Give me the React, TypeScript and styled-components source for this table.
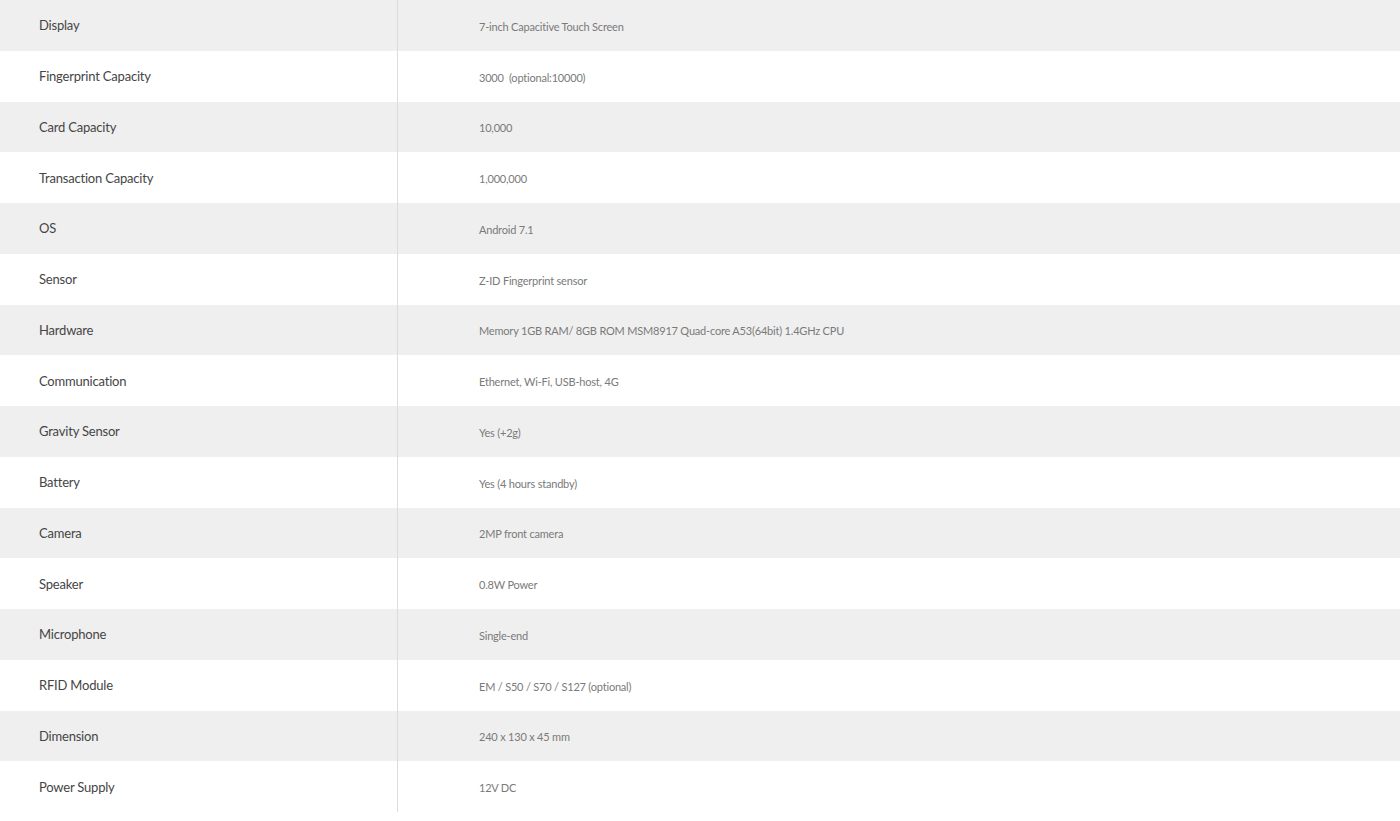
import styled, { createGlobalStyle } from "styled-components";

const GlobalStyle = createGlobalStyle`
  html, body {
    margin: 0;
    padding: 0;
    background: #ffffff;
  }
`;

const SpecTable = styled.div`
  width: 1400px;
  display: flex;
  flex-direction: column;
  font-family: Lato, "Open Sans", sans-serif;
`;

interface RowProps {
  shaded: boolean;
}

const Row = styled.div<RowProps>`
  display: grid;
  grid-template-columns: 398px 1fr;
  height: 50.75px;
  align-items: stretch;
  background-color: ${(p) => (p.shaded ? "#efefef" : "#ffffff")};
`;

const Label = styled.div`
  display: flex;
  align-items: center;
  padding-left: 39px;
  border-right: 1px solid #dcdcdc;
  font-size: 13px;
  color: #454545;
  letter-spacing: -0.2px;
`;

const Value = styled.div`
  display: flex;
  align-items: center;
  padding-left: 81px;
  padding-top: 2px;
  font-size: 11px;
  color: #7a7a7a;
  letter-spacing: -0.2px;
  white-space: pre;
`;

const specs: [string, string][] = [
  ["Display", "7-inch Capacitive Touch Screen"],
  ["Fingerprint Capacity", "3000  (optional:10000)"],
  ["Card Capacity", "10,000"],
  ["Transaction Capacity", "1,000,000"],
  ["OS", "Android 7.1"],
  ["Sensor", "Z-ID Fingerprint sensor"],
  ["Hardware", "Memory 1GB RAM/ 8GB ROM MSM8917 Quad-core A53(64bit) 1.4GHz CPU"],
  ["Communication", "Ethernet, Wi-Fi, USB-host, 4G"],
  ["Gravity Sensor", "Yes (+2g)"],
  ["Battery", "Yes (4 hours standby)"],
  ["Camera", "2MP front camera"],
  ["Speaker", "0.8W Power"],
  ["Microphone", "Single-end"],
  ["RFID Module", "EM / S50 / S70 / S127 (optional)"],
  ["Dimension", "240 x 130 x 45 mm"],
  ["Power Supply", "12V DC"],
];

export default function App() {
  return (
    <>
      <GlobalStyle />
      <SpecTable>
        {specs.map(([label, value], i) => (
          <Row key={label} shaded={i % 2 === 0}>
            <Label>{label}</Label>
            <Value>{value}</Value>
          </Row>
        ))}
      </SpecTable>
    </>
  );
}
